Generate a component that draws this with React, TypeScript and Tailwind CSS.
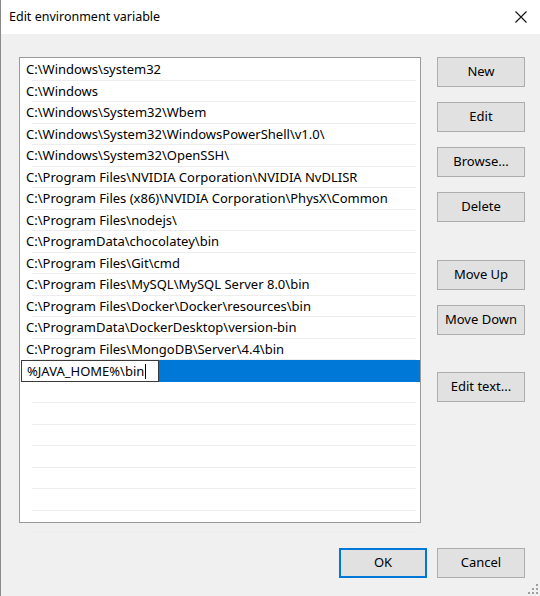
import React from "react";

const paths = [
  "C:\\Windows\\system32",
  "C:\\Windows",
  "C:\\Windows\\System32\\Wbem",
  "C:\\Windows\\System32\\WindowsPowerShell\\v1.0\\",
  "C:\\Windows\\System32\\OpenSSH\\",
  "C:\\Program Files\\NVIDIA Corporation\\NVIDIA NvDLISR",
  "C:\\Program Files (x86)\\NVIDIA Corporation\\PhysX\\Common",
  "C:\\Program Files\\nodejs\\",
  "C:\\ProgramData\\chocolatey\\bin",
  "C:\\Program Files\\Git\\cmd",
  "C:\\Program Files\\MySQL\\MySQL Server 8.0\\bin",
  "C:\\Program Files\\Docker\\Docker\\resources\\bin",
  "C:\\ProgramData\\DockerDesktop\\version-bin",
  "C:\\Program Files\\MongoDB\\Server\\4.4\\bin",
];

const font = { fontFamily: '"Noto Sans", "Open Sans", sans-serif' };

function Row({ children }: { children?: React.ReactNode }) {
  return (
    <div className="flex flex-col h-[21.5px] shrink-0">
      <div className="flex-1 flex items-center pl-[6px] text-[13px] text-black whitespace-nowrap leading-none">
        {children}
      </div>
      <div className="h-px ml-[12px] mr-[4px] bg-[#ededed]" />
    </div>
  );
}

function Button({ label, primary }: { label: string; primary?: boolean }) {
  return (
    <div
      className={
        "w-[88px] h-[30px] shrink-0 flex items-center justify-center bg-[#e1e1e1] text-[13px] text-black " +
        (primary ? "border-2 border-[#0078d7]" : "border border-[#adadad]")
      }
    >
      {label}
    </div>
  );
}

export default function App() {
  return (
    <div
      className="relative w-[540px] h-[596px] bg-[#f0f0f0] border-l border-[#8a8a8a] flex flex-col overflow-hidden"
      style={font}
    >
      {/* title bar */}
      <div className="h-[34px] shrink-0 bg-white flex items-center justify-between pl-[8px] pr-[13px]">
        <span className="text-[12.5px] text-black">Edit environment variable</span>
        <svg width="12" height="12" viewBox="0 0 12 12">
          <path d="M0.5 0.5 L11.5 11.5 M11.5 0.5 L0.5 11.5" stroke="#111" strokeWidth="1.1" fill="none" />
        </svg>
      </div>

      {/* body */}
      <div className="flex pl-[18px] pt-[23px] gap-[16px]">
        <div className="w-[402px] h-[466px] bg-white border border-[#9a9a9a] pt-[1.25px] flex flex-col">
          {paths.map((p) => (
            <Row key={p}>{p}</Row>
          ))}
          {/* row being edited */}
          <div className="flex h-[21.5px] shrink-0">
            <div className="ml-px w-[138px] h-full bg-white border border-[#3a3a3a] flex items-center pl-[5px] text-[13px] text-black leading-none whitespace-nowrap">
              %JAVA_HOME%\bin
              <span className="inline-block w-px h-[15px] bg-black ml-[1px]" />
            </div>
            <div className="flex-1 h-full bg-[#0078d7]" />
          </div>
          {Array.from({ length: 7 }).map((_, i) => (
            <Row key={"e" + i} />
          ))}
        </div>

        <div className="flex flex-col">
          <div className="flex flex-col gap-[15px]">
            <Button label="New" />
            <Button label="Edit" />
            <Button label="Browse..." />
            <Button label="Delete" />
          </div>
          <div className="flex flex-col gap-[15px] mt-[38px]">
            <Button label="Move Up" />
            <Button label="Move Down" />
          </div>
          <div className="mt-[37px]">
            <Button label="Edit text..." />
          </div>
        </div>
      </div>

      {/* footer */}
      <div className="flex justify-end gap-[10px] pr-[15px] mt-[25px]">
        <Button label="OK" primary />
        <Button label="Cancel" />
      </div>

      {/* size grip */}
      <svg className="absolute right-[2px] bottom-[2px]" width="10" height="10" viewBox="0 0 10 10">
        <g fill="#a0a0a0">
          <rect x="8" y="0" width="2" height="2" />
          <rect x="4" y="4" width="2" height="2" />
          <rect x="8" y="4" width="2" height="2" />
          <rect x="0" y="8" width="2" height="2" />
          <rect x="4" y="8" width="2" height="2" />
          <rect x="8" y="8" width="2" height="2" />
        </g>
      </svg>
    </div>
  );
}
